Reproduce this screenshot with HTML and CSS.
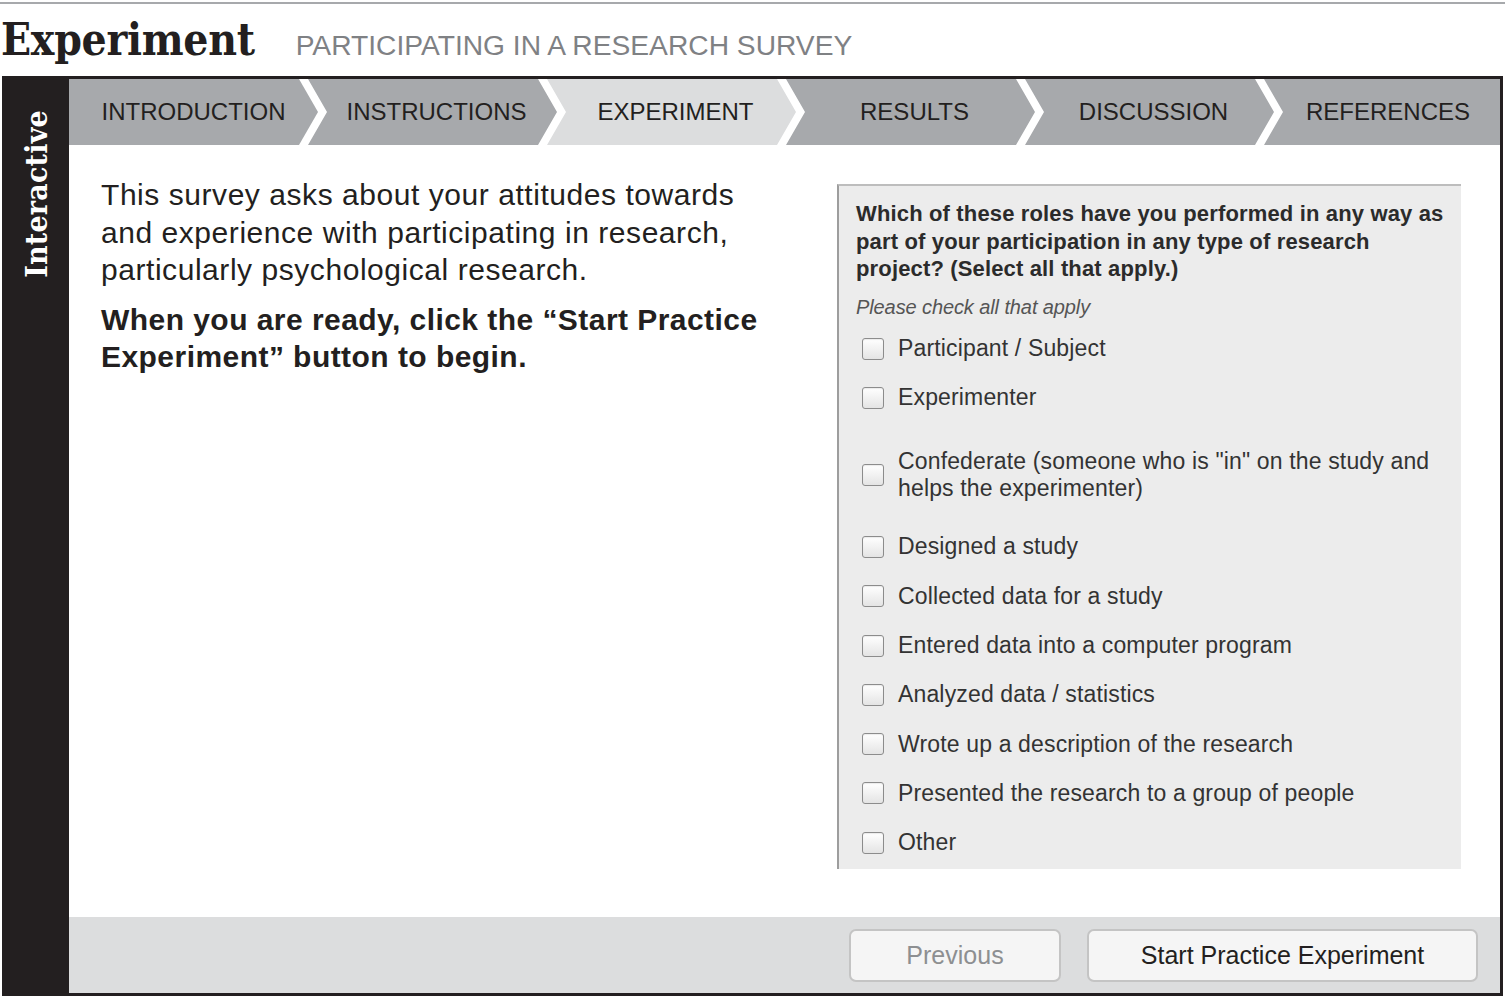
FILE: index.html
```html
<!DOCTYPE html>
<html lang="en">
<head>
<meta charset="utf-8">
<title>Experiment – Participating in a Research Survey</title>
<link rel="stylesheet" href="styles.css">
</head>
<body>
<div class="topline"></div>
<header class="header">
  <h1 class="title">Experiment</h1>
  <div class="subtitle">PARTICIPATING IN A RESEARCH SURVEY</div>
</header>
<div class="frame">
  <aside class="sidebar"><span class="sidebar-label">Interactive</span></aside>
  <main class="main">
    <nav class="tabs">
      <div class="tab tab-first">INTRODUCTION</div>
      <div class="tab">INSTRUCTIONS</div>
      <div class="tab tab-active">EXPERIMENT</div>
      <div class="tab">RESULTS</div>
      <div class="tab">DISCUSSION</div>
      <div class="tab tab-last">REFERENCES</div>
    </nav>
    <section class="content">
      <div class="intro">
        <p class="intro-text">This survey asks about your attitudes towards and experience with participating in research, particularly psychological research.</p>
        <p class="intro-strong">When you are ready, click the “Start Practice Experiment” button to begin.</p>
      </div>
      <div class="survey">
        <div class="question">Which of these roles have you performed in any way as part of your participation in any type of research project? (Select all that apply.)</div>
        <div class="hint">Please check all that apply</div>
        <div class="options">
          <label class="option"><span class="box"></span><span class="opt-text">Participant / Subject</span></label>
          <label class="option"><span class="box"></span><span class="opt-text">Experimenter</span></label>
          <label class="option option-tall"><span class="box"></span><span class="opt-text">Confederate (someone who is "in" on the study and helps the experimenter)</span></label>
          <label class="option"><span class="box"></span><span class="opt-text">Designed a study</span></label>
          <label class="option"><span class="box"></span><span class="opt-text">Collected data for a study</span></label>
          <label class="option"><span class="box"></span><span class="opt-text">Entered data into a computer program</span></label>
          <label class="option"><span class="box"></span><span class="opt-text">Analyzed data / statistics</span></label>
          <label class="option"><span class="box"></span><span class="opt-text">Wrote up a description of the research</span></label>
          <label class="option"><span class="box"></span><span class="opt-text">Presented the research to a group of people</span></label>
          <label class="option"><span class="box"></span><span class="opt-text">Other</span></label>
        </div>
      </div>
    </section>
    <footer class="footer">
      <button class="btn btn-disabled">Previous</button>
      <button class="btn btn-primary">Start Practice Experiment</button>
    </footer>
  </main>
</div>
</body>
</html>
```
FILE: styles.css
```css
* { box-sizing: border-box; }
html, body { margin: 0; padding: 0; }
body {
  width: 1505px;
  height: 999px;
  background: #ffffff;
  color: #231f20;
  font-family: "Liberation Sans", Arial, sans-serif;
  padding-top: 2px;
  overflow: hidden;
}
.topline {
  height: 2px;
  background: #a7a9ac;
}
.header {
  height: 72px;
  display: flex;
  align-items: baseline;
  padding: 14px 0 0 1px;
}
.title {
  margin: 0;
  font-family: "DejaVu Serif Condensed", "DejaVu Serif", serif;
  font-stretch: condensed;
  font-weight: bold;
  font-size: 44px;
  line-height: 44px;
  letter-spacing: -0.3px;
  color: #231f20;
}
.subtitle {
  margin-left: 41px;
  font-size: 28.2px;
  color: #7f8184;
}
.frame {
  margin-left: 2px;
  width: 1501px;
  height: 920px;
  border: 3px solid #231f20;
  display: flex;
}
.sidebar {
  width: 64px;
  background: #231f20;
  display: flex;
  justify-content: center;
  align-items: flex-start;
  padding-top: 31px;
}
.sidebar-label {
  writing-mode: vertical-rl;
  transform: rotate(180deg);
  font-family: "DejaVu Serif Condensed", "DejaVu Serif", serif;
  font-stretch: condensed;
  font-weight: bold;
  font-size: 30px;
  line-height: 1;
  letter-spacing: 0.2px;
  color: #ffffff;
}
.main {
  flex: 1;
  display: flex;
  flex-direction: column;
  min-width: 0;
}
.tabs {
  height: 66px;
  display: flex;
  background: #ffffff;
}
.tab {
  flex: 0 0 249px;
  margin-left: -10px;
  padding-left: 8px;
  background: #a7a9ac;
  display: flex;
  align-items: center;
  justify-content: center;
  font-size: 24px;
  color: #231f20;
  clip-path: polygon(0 0, calc(100% - 19px) 0, 100% 50%, calc(100% - 19px) 100%, 0 100%, 19px 50%);
}
.tab-first {
  margin-left: 0;
  padding-left: 0;
  clip-path: polygon(0 0, calc(100% - 19px) 0, 100% 50%, calc(100% - 19px) 100%, 0 100%);
}
.tab-last {
  flex: 1 1 auto;
  padding-left: 12px;
  clip-path: polygon(0 0, 100% 0, 100% 100%, 0 100%, 19px 50%);
}
.tab-active {
  background: #dcddde;
}
.content {
  flex: 1;
  display: flex;
  align-items: flex-start;
  padding: 31px 39px 0 32px;
}
.intro {
  width: 680px;
  margin-right: auto;
}
.intro-text, .intro-strong {
  margin: 0;
  font-size: 30px;
  color: #231f20;
}
.intro-text {
  line-height: 37.5px;
  letter-spacing: 0.55px;
}
.intro-strong {
  margin-top: 12.5px;
  font-weight: bold;
  line-height: 37px;
  letter-spacing: 0.45px;
}
.survey {
  width: 624px;
  height: 685px;
  margin-top: 8px;
  overflow: hidden;
  background: #ececec;
  border-top: 2px solid #bdbdbd;
  border-left: 2px solid #9d9d9d;
  padding: 14px 10px 0 17px;
}
.question {
  font-size: 22px;
  font-weight: bold;
  line-height: 27.5px;
  letter-spacing: 0.15px;
  color: #2b2b2b;
}
.hint {
  margin-top: 12px;
  font-size: 20px;
  line-height: 24px;
  font-style: italic;
  color: #555555;
  letter-spacing: -0.1px;
}
.options {
  margin-top: 5.5px;
  display: flex;
  flex-direction: column;
}
.option {
  display: flex;
  align-items: center;
  height: 49.3px;
  padding-left: 6px;
}
.option-tall {
  height: 99.7px;
  padding-top: 6px;
}
.box {
  flex: 0 0 22px;
  width: 22px;
  height: 22px;
  border: 1px solid #8c8c8c;
  border-radius: 3px;
  background: linear-gradient(#ffffff, #e4e4e4);
  box-shadow: inset 0 1px 1px rgba(0,0,0,0.08);
}
.opt-text {
  margin-left: 14px;
  font-size: 23px;
  line-height: 27px;
  letter-spacing: 0.15px;
  color: #333333;
}
.footer {
  height: 76px;
  background: #dcddde;
  display: flex;
  justify-content: flex-end;
  align-items: flex-start;
  padding: 12px 22px 0 0;
  gap: 26px;
}
.btn {
  height: 53px;
  border: 2px solid #c4c4c4;
  border-radius: 7px;
  background: #f5f5f5;
  font-family: "Liberation Sans", Arial, sans-serif;
  font-size: 25px;
  padding: 0;
  cursor: pointer;
}
.btn-disabled {
  width: 212px;
  color: #8d8f91;
}
.btn-primary {
  width: 391px;
  color: #231f20;
}
```
